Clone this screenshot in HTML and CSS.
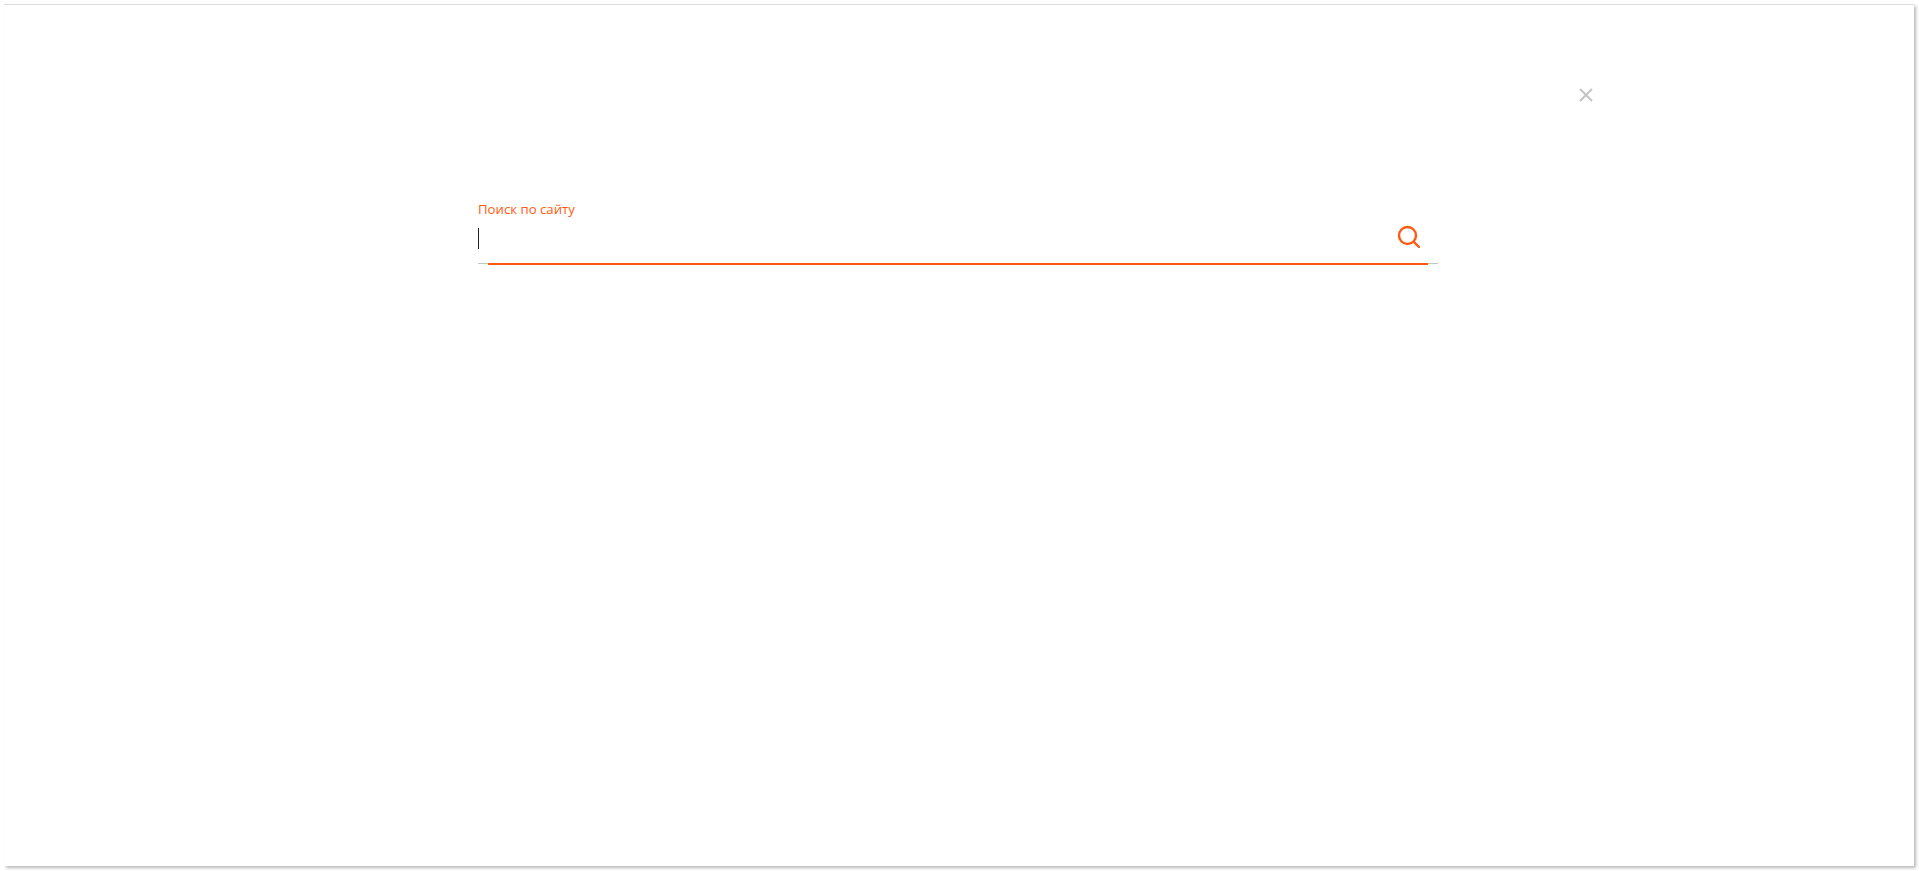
FILE: index.html
```html
<!DOCTYPE html>
<html lang="ru">
<head>
<meta charset="utf-8">
<title>Поиск по сайту</title>
<link rel="stylesheet" href="styles.css">
</head>
<body>
<main class="panel">
  <div class="close-row">
    <button class="close" type="button" aria-label="Закрыть">
      <svg width="16" height="16" viewBox="0 0 16 16"><path d="M2 2l12 12M14 2L2 14" fill="none" stroke="#c4c4c4" stroke-width="2"/></svg>
    </button>
  </div>
  <form class="search">
    <label class="search-label">Поиск по сайту</label>
    <div class="search-field">
      <span class="caret"></span>
      <svg class="search-icon" width="24" height="24" viewBox="0 0 24 24"><circle cx="10.5" cy="10.5" r="8.5" fill="none" stroke="#ff5a0f" stroke-width="2.4"/><path d="M16.8 16.8L22 22" fill="none" stroke="#ff5a0f" stroke-width="2.4" stroke-linecap="round"/></svg>
    </div>
    <div class="search-line"><span class="search-line-active"></span></div>
  </form>
</main>
</body>
</html>
```
FILE: styles.css
```css
* { box-sizing: border-box; }
html, body { margin: 0; height: 100%; background: #fff; overflow: hidden; }
body { padding: 4px 5px 5px 4px; font-family: "Open Sans", "Liberation Sans", sans-serif; }
.panel {
  height: 862px;
  background: #fff;
  border-top: 1px solid #dcdcdc;
  box-shadow: 2px 2px 3px rgba(0,0,0,.28);
  padding: 82px 320px 0 474px;
}
.close-row { display: flex; justify-content: flex-end; height: 16px; }
.close { width: 16px; height: 16px; padding: 0; border: 0; background: none; display: block; }
.close svg { display: block; }
.search { width: 960px; margin-top: 97px; }
.search-label { display: block; color: #ff5a0f; font-size: 13.2px; line-height: 18px; }
.search-field { display: flex; align-items: flex-start; justify-content: space-between; height: 45px; padding-right: 17px; padding-top: 7px; }
.caret { width: 1px; height: 21px; margin-top: 3px; background: #222; display: block; }
.search-icon { display: block; }
.search-line { height: 2px; display: flex; justify-content: center; background: linear-gradient(#c4c4c4,#c4c4c4) 0 0/100% 1px no-repeat; }
.search-line-active { display: block; width: 940px; height: 2px; background: #ff5a0f; }
```
